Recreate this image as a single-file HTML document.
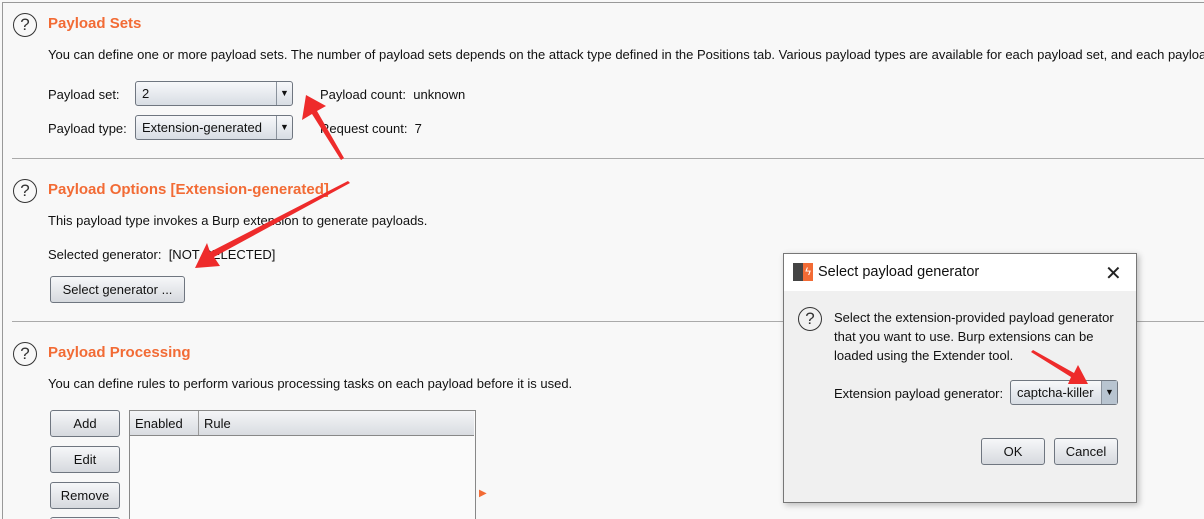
<!DOCTYPE html>
<html><head><style>
html,body{margin:0;width:1204px;height:519px;overflow:hidden}
body{background:#f8f8f8;font-family:"Liberation Sans",Arial,sans-serif;font-size:13px;color:#111;position:relative}
.a{position:absolute;white-space:nowrap}
.h{color:#f26b35;font-weight:bold;font-size:15px}
.q{position:absolute;width:22px;height:22px;border:1.5px solid #333;border-radius:50%;font-size:17px;text-align:center;line-height:22px;color:#333}
.btn{position:absolute;border:1px solid #6f7680;border-radius:3px;background:linear-gradient(#f6f7f9,#d6d9de);text-align:center;box-sizing:border-box}
.combo{position:absolute;border:1px solid #6f7680;border-radius:3px;background:linear-gradient(#f7f8fa,#d8dde4);box-sizing:border-box;padding-left:6px}
.combo .dd{position:absolute;right:0;top:0;bottom:0;width:15px;border-left:1px solid #8a929c;font-size:9px;text-align:center}
.hr{position:absolute;left:12px;right:0;height:1px;background:#aaa}
</style></head><body>
<div style="position:absolute;left:2px;top:2px;right:0;bottom:0;border-left:1px solid #999;border-top:1px solid #999"></div>
<div class="q" style="left:13px;top:13px">?</div>
<div class="a h" style="left:48px;top:15px">Payload Sets</div>
<div class="a" style="left:48px;top:47px">You can define one or more payload sets. The number of payload sets depends on the attack type defined in the Positions tab. Various payload types are available for each payload set, and each payload</div>
<div class="a" style="left:48px;top:87px">Payload set:</div>
<div class="combo" style="left:135px;top:81px;width:158px;height:25px;line-height:23px">2<div class="dd">▼</div></div>
<div class="a" style="left:320px;top:87px">Payload count:&nbsp; unknown</div>
<div class="a" style="left:48px;top:121px">Payload type:</div>
<div class="combo" style="left:135px;top:115px;width:158px;height:25px;line-height:23px">Extension-generated<div class="dd">▼</div></div>
<div class="a" style="left:320px;top:121px">Request count:&nbsp; 7</div>
<div class="hr" style="top:158px"></div>
<div class="q" style="left:13px;top:179px">?</div>
<div class="a h" style="left:48px;top:181px">Payload Options [Extension-generated]</div>
<div class="a" style="left:48px;top:213px">This payload type invokes a Burp extension to generate payloads.</div>
<div class="a" style="left:48px;top:247px">Selected generator:&nbsp; [NOT SELECTED]</div>
<div class="btn" style="left:50px;top:276px;width:135px;height:27px;line-height:25px">Select generator ...</div>
<div class="hr" style="top:321px"></div>
<div class="q" style="left:13px;top:342px">?</div>
<div class="a h" style="left:48px;top:344px">Payload Processing</div>
<div class="a" style="left:48px;top:376px">You can define rules to perform various processing tasks on each payload before it is used.</div>
<div class="btn" style="left:50px;top:410px;width:70px;height:27px;line-height:25px">Add</div>
<div class="btn" style="left:50px;top:446px;width:70px;height:27px;line-height:25px">Edit</div>
<div class="btn" style="left:50px;top:482px;width:70px;height:27px;line-height:25px">Remove</div>
<div class="btn" style="left:50px;top:517px;width:70px;height:27px"></div>
<div style="position:absolute;left:129px;top:410px;width:345px;height:120px;border:1px solid #888;background:#fafafa"></div>
<div style="position:absolute;left:130px;top:411px;width:344px;height:24px;border-bottom:1px solid #888;background:linear-gradient(#f4f5f7,#d9dce1)"></div>
<div style="position:absolute;left:198px;top:411px;width:1px;height:24px;background:#999"></div>
<div class="a" style="left:135px;top:416px">Enabled</div>
<div class="a" style="left:204px;top:416px">Rule</div>
<div class="a" style="left:479px;top:488px;color:#f26b35;font-size:10px">▶</div>

<div style="position:absolute;left:783px;top:253px;width:352px;height:248px;border:1px solid #777;background:#f0f0f0;box-shadow:2px 2px 6px rgba(0,0,0,.25)">
 <div style="height:37px;background:#fff"></div>
</div>
<div style="position:absolute;left:793px;top:263px;width:10px;height:18px;background:#444"></div>
<div style="position:absolute;left:803px;top:263px;width:10px;height:18px;background:#f26b35;color:#fff;font-size:11px;line-height:18px;text-align:center">ϟ</div>
<div class="a" style="left:818px;top:264px;font-size:14.5px">Select payload generator</div>
<div class="a" style="left:1105px;top:261px;font-size:20px;color:#222">✕</div>
<div class="q" style="left:798px;top:307px">?</div>
<div class="a" style="left:834px;top:308px;line-height:19px">Select the extension-provided payload generator<br>that you want to use. Burp extensions can be<br>loaded using the Extender tool.</div>
<div class="a" style="left:834px;top:386px">Extension payload generator:</div>
<div class="combo" style="left:1010px;top:380px;width:108px;height:25px;line-height:23px">captcha-killer<div class="dd" style="background:#b8c4d0">▼</div></div>
<div class="btn" style="left:981px;top:438px;width:64px;height:27px;line-height:25px">OK</div>
<div class="btn" style="left:1054px;top:438px;width:64px;height:27px;line-height:25px">Cancel</div>

<svg style="position:absolute;left:0;top:0" width="1204" height="519">
<g fill="#ee2b2b">
<polygon points="306,95 302,120 312,114 341,160 344,158 317,111 326,106"/>
<polygon points="195,268 220,266 214,257 350,183 348,181 210,252 207,243"/>
<polygon points="1088,384 1078,365 1074,373 1033,350 1031,352 1071,377 1068,384"/>
</g></svg>
</body></html>
